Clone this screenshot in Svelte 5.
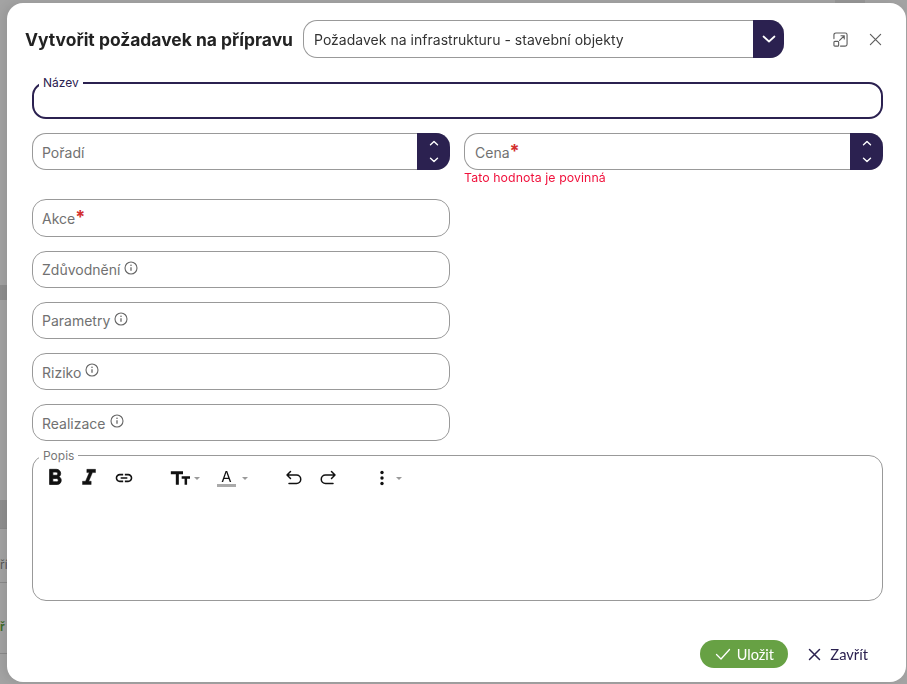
<script lang="ts">
	const infoFields = [
		{ name: 'Zdůvodnění', tight: true },
		{ name: 'Parametry', tight: true },
		{ name: 'Riziko', tight: false },
		{ name: 'Realizace', tight: false }
	];
</script>

<div class="backdrop">
	<div class="bg-band one"></div>
	<div class="bg-band two"></div>
	<div class="bg-line l1"></div>
	<div class="bg-line l2"></div>
	<div class="bg-line l3"></div>
	<span class="bg-text t1">ří</span>
	<span class="bg-text t2">ř</span>
	<div class="bg-top"></div>
</div>

<div class="page">
	<div class="modal">
		<header class="head">
			<h1>Vytvořit požadavek na přípravu</h1>
			<div class="select">
				<span class="select-value">Požadavek na infrastrukturu - stavební objekty</span>
				<button class="side-btn big" aria-label="Otevřít">
					<svg width="18" height="18" viewBox="0 0 18 18"><path d="M3.500 6.500L9 11.500l5.500-5" fill="none" stroke="#fff" stroke-width="1.700" stroke-linecap="round" stroke-linejoin="round" /></svg>
				</button>
			</div>
			<div class="head-icons">
				<svg width="15" height="15" viewBox="0 0 16 16" fill="none" stroke="#5f5f5f" stroke-width="1.200" stroke-linecap="round" stroke-linejoin="round"><path d="M1 7V3a2 2 0 0 1 2-2h10a2 2 0 0 1 2 2v10a2 2 0 0 1-2 2H8" /><rect x="1" y="10" width="5" height="5" rx="1" /><path d="M7 9l5-5M8.500 4H12v3.500" /></svg>
				<svg width="13" height="13" viewBox="0 0 14 14" fill="none" stroke="#5f5f5f" stroke-width="1.300" stroke-linecap="round"><path d="M1.500 1.500l11 11M12.500 1.500l-11 11" /></svg>
			</div>
		</header>

		<div class="form">
			<div class="field focus">
				<span class="legend">Název</span>
			</div>

			<div class="columns">
				<div class="col">
					<div class="field number">
						<span class="ph">Pořadí</span>
						<div class="side-btn spin">
							<svg width="10" height="6" viewBox="0 0 10 6"><path d="M1.500 4.800L5 1.500l3.500 3.300" fill="none" stroke="#fff" stroke-width="1.400" stroke-linecap="round" stroke-linejoin="round" /></svg>
							<svg width="10" height="6" viewBox="0 0 10 6"><path d="M1.500 1.200L5 4.500l3.500-3.300" fill="none" stroke="#fff" stroke-width="1.400" stroke-linecap="round" stroke-linejoin="round" /></svg>
						</div>
					</div>
				</div>
				<div class="col">
					<div class="field number cena">
						<span class="ph">Cena<b class="req">*</b></span>
						<div class="side-btn spin">
							<svg width="10" height="6" viewBox="0 0 10 6"><path d="M1.500 4.800L5 1.500l3.500 3.300" fill="none" stroke="#fff" stroke-width="1.400" stroke-linecap="round" stroke-linejoin="round" /></svg>
							<svg width="10" height="6" viewBox="0 0 10 6"><path d="M1.500 1.200L5 4.500l3.500-3.300" fill="none" stroke="#fff" stroke-width="1.400" stroke-linecap="round" stroke-linejoin="round" /></svg>
						</div>
					</div>
					<div class="error">Tato hodnota je povinná</div>
				</div>
			</div>

			<div class="half">
				<div class="field akce"><span class="ph tight">Akce<b class="req">*</b></span></div>
				{#each infoFields as item}
					<div class="field">
						<span class="ph" class:tight={item.tight}>{item.name}</span>
						<svg class="info" width="14" height="14" viewBox="0 0 14 14" fill="none" stroke="#666"><circle cx="7" cy="7" r="6" stroke-width="1.100" /><path d="M7 6.200v3.600" stroke-width="1.300" /><circle cx="7" cy="4.200" r=".8" fill="#666" stroke="none" /></svg>
					</div>
				{/each}
			</div>

			<div class="editor">
				<span class="legend grey">Popis</span>
				<div class="toolbar">
					<svg class="i-bold" width="26" height="26" viewBox="0 0 24 24" fill="#111" stroke="#111" stroke-width=".7"><path d="M15.600 10.790c.97-.67 1.650-1.770 1.650-2.790 0-2.260-1.750-4-4-4H7v14h7.040c2.090 0 3.710-1.700 3.710-3.790 0-1.520-.86-2.820-2.150-3.420zM10 6.500h3c.83 0 1.500.67 1.500 1.500s-.67 1.500-1.500 1.500h-3v-3zm3.500 9H10v-3h3.500c.83 0 1.500.67 1.500 1.500s-.67 1.500-1.500 1.500z" /></svg>
					<svg class="i-ital" width="26" height="26" viewBox="0 0 24 24" fill="#111" stroke="#111" stroke-width=".4"><path d="M10 4v3h2.210l-3.420 8H6v3h8v-3h-2.210l3.420-8H18V4z" /></svg>
					<svg class="i-link" width="20" height="20" viewBox="0 0 24 24" fill="#111"><path d="M3.900 12c0-1.710 1.390-3.100 3.100-3.100h4V7H7c-2.760 0-5 2.240-5 5s2.240 5 5 5h4v-1.900H7c-1.710 0-3.100-1.390-3.100-3.100zM8 13h8v-2H8v2zm9-6h-4v1.900h4c1.710 0 3.100 1.390 3.100 3.100s-1.390 3.100-3.100 3.100h-4V17h4c2.760 0 5-2.240 5-5s-2.240-5-5-5z" /></svg>
					<svg class="i-size" width="20" height="20" viewBox="0 0 24 24" fill="#111"><path d="M1 4v3.400h6V20h3.600V7.400h5V4zM14 10v2.800h3.500V20h3v-7.200H24V10z" /></svg>
					<i class="caret"></i>
					<span class="color">A</span>
					<i class="caret c2"></i>
					<svg class="i-undo" width="18" height="18" viewBox="0 0 18 18" fill="none" stroke="#111" stroke-width="1.500" stroke-linecap="round" stroke-linejoin="round"><path d="M5.500 2.500L2 6l3.500 3.500M2 6h9.500a4 4 0 0 1 0 8.500H4" /></svg>
					<svg class="i-redo" width="18" height="18" viewBox="0 0 18 18" fill="none" stroke="#111" stroke-width="1.500" stroke-linecap="round" stroke-linejoin="round"><path d="M12.500 2.500L16 6l-3.500 3.500M16 6H6.500a4 4 0 0 0 0 8.500H14" /></svg>
					<svg class="i-more" width="4" height="16" viewBox="0 0 4 16" fill="#111"><circle cx="2" cy="2.500" r="1.700" /><circle cx="2" cy="8" r="1.700" /><circle cx="2" cy="13.500" r="1.700" /></svg>
					<i class="caret c3"></i>
				</div>
			</div>
		</div>

		<footer class="foot">
			<button class="save">
				<svg width="16" height="12" viewBox="0 0 16 12" fill="none" stroke="#fff" stroke-width="1.300" stroke-linecap="round" stroke-linejoin="round"><path d="M1.500 6.500l4.500 4.500 8.500-9.500" /></svg>
				Uložit
			</button>
			<button class="close">
				<svg width="13" height="13" viewBox="0 0 13 13" fill="none" stroke="#2b2150" stroke-width="1.500" stroke-linecap="round"><path d="M1.500 1.500l10 10M11.500 1.500l-10 10" /></svg>
				Zavřít
			</button>
		</footer>
	</div>
</div>

<style>
	:global(body) {
		margin: 0;
		background: #a3a3a3;
		font-family: Inter, "Liberation Sans", sans-serif;
	}
	.backdrop {
		position: fixed;
		inset: 0;
		overflow: hidden;
		background: #a3a3a3;
	}
	.bg-band { position: absolute; left: 0; width: 8px; background: #8f8f8f; }
	.bg-band.one { top: 285px; height: 15px; }
	.bg-band.two { top: 500px; height: 28px; }
	.bg-line { position: absolute; left: 0; width: 8px; height: 1px; background: #8a8a8a; }
	.l1 { top: 528px; }
	.l2 { top: 582px; }
	.l3 { top: 653px; }
	.bg-text { position: absolute; font-size: 12px; line-height: 16px; left: 0; color: #555; }
	.t1 { top: 557px; }
	.t2 { top: 619px; color: #3f6b28; font-weight: 600; }
	.bg-top { position: absolute; top: 0; left: 835px; width: 30px; height: 3px; background: #979797; }

	.page {
		position: relative;
		box-sizing: border-box;
		height: 684px;
		padding: 3px 1px 2px 7px;
	}
	.modal {
		box-sizing: border-box;
		height: 100%;
		background: #fff;
		border-radius: 16px;
		box-shadow: -4px 0 10px rgba(0, 0, 0, 0.08);
		padding: 17px 23px 0 18px;
		display: flex;
		flex-direction: column;
		color: #222;
	}
	.head {
		display: flex;
		align-items: center;
		height: 38px;
	}
	h1 {
		margin: 0;
		font-size: 17.450px;
		font-weight: 700;
		color: #222;
		white-space: nowrap;
		width: 278px;
		flex: none;
	}
	.select {
		box-sizing: border-box;
		width: 481px;
		height: 38px;
		flex: none;
		border: 1px solid #999;
		border-right: 0;
		border-radius: 14px;
		display: flex;
		align-items: center;
		justify-content: space-between;
		padding-left: 10px;
	}
	.select-value { font-size: 14px; color: #333; letter-spacing: 0.02px; }
	.side-btn {
		background: #2b2150;
		border: 0;
		padding: 0;
		display: flex;
		align-items: center;
		justify-content: center;
		border-radius: 0 14px 14px 0;
	}
	.side-btn.big { width: 31px; height: 38px; margin: -1px 0; }
	.head-icons {
		display: flex;
		align-items: center;
		gap: 21px;
		margin-left: 49px;
	}

	.form { margin-top: 24px; padding-left: 7px; display: flex; flex-direction: column; }
	.field {
		box-sizing: border-box;
		position: relative;
		height: 37px;
		border: 1px solid #999;
		border-radius: 14px;
		display: flex;
		align-items: center;
		gap: 4px;
		padding-left: 9px;
		background: #fff;
	}
	.focus { border: 2px solid #2b2150; }
	.legend {
		position: absolute;
		top: -9px;
		left: 5px;
		background: #fff;
		padding: 0 4px;
		font-size: 12px;
		line-height: 15px;
		color: #2b2150;
	}
	.legend.grey { color: #777; left: 6px; top: -8px; }
	.ph { font-size: 14px; color: #717171; padding-top: 2px; }
	.ph.tight { padding-top: 0; }
	.req { color: #d32f2f; font-weight: 700; font-size: 18px; line-height: 10px; vertical-align: 1px; }
	.columns {
		display: grid;
		grid-template-columns: 418px 419px;
		gap: 14px;
		margin-top: 14px;
		height: 66px;
	}
	.number { padding-right: 0; justify-content: space-between; border-right: 0; }
	.cena { padding-left: 10px; }
	.side-btn.spin {
		flex-direction: column;
		gap: 11px;
		width: 33px;
		height: 37px;
		margin: -1px 0;
	}
	.error { font-size: 12.300px; color: #f0113c; line-height: 15px; letter-spacing: 0.1px; }
	.half {
		width: 418px;
		display: flex;
		flex-direction: column;
		gap: 14px;
	}
	.akce { height: 38px; }
	.info { margin-top: -3px; }

	.editor {
		box-sizing: border-box;
		position: relative;
		height: 146px;
		margin-top: 14px;
		border: 1px solid #999;
		border-radius: 14px;
		padding: 13px 0 0 9px;
	}
	.toolbar { display: flex; align-items: center; height: 18px; }
	.i-ital { margin-left: 8px; }
	.i-link { margin-left: 12px; }
	.i-size { margin-left: 36px; }
	.caret {
		display: block;
		flex: none;
		width: 0;
		border: 3px solid transparent;
		border-top: 3px solid #9a9a9a;
		border-bottom: 0;
		margin-left: 4px;
	}
	.c2 { margin-left: 6px; }
	.c3 { margin-left: 12px; }
	.color {
		margin-left: 17px;
		font-size: 15px;
		line-height: 14px;
		width: 19px;
		text-align: center;
		color: #111;
		border-bottom: 3px solid #aaa;
	}
	.i-undo { margin-left: 37px; }
	.i-redo { margin-left: 16px; }
	.i-more { margin-left: 43px; }

	.foot {
		display: flex;
		justify-content: flex-end;
		align-items: center;
		gap: 20px;
		margin-top: 39px;
		padding-right: 15px;
	}
	.foot button {
		font-family: Lato, sans-serif;
		font-size: 14.500px;
		display: inline-flex;
		align-items: center;
		border: 0;
		padding: 0;
		background: none;
	}
	.foot .save {
		height: 28px;
		width: 88px;
		justify-content: center;
		gap: 6px;
		color: #fff;
		background: #67a144;
		border-radius: 14px;
	}
	.foot .close { color: #2b2150; gap: 9px; font-size: 14.700px; }
</style>
